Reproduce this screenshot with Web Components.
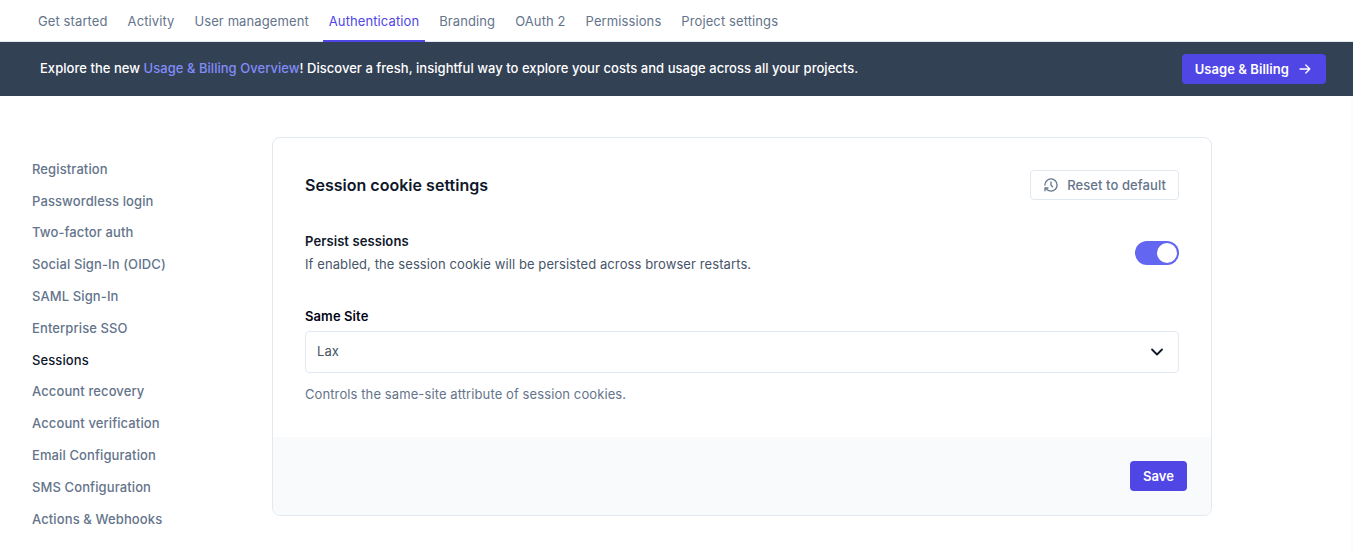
<!DOCTYPE html>
<html lang="en">
<head>
<meta charset="utf-8">
<title>Session cookie settings</title>
<style>
html, body { margin: 0; height: 554px; overflow: hidden; background: #fff; }
body { font-family: Inter, "Liberation Sans", sans-serif; font-size: 13px; line-height: 20px; color: #64748b; }
</style>
</head>
<body>
<console-page></console-page>
<script>
const define = (name, html) => customElements.define(name, class extends HTMLElement {
  constructor() {
    super();
    const t = document.createElement('template');
    t.innerHTML = html;
    this.attachShadow({ mode: 'open' }).appendChild(t.content.cloneNode(true));
  }
});

define('nav-tab', `<style>
:host { display: block; box-sizing: border-box; height: 42px; padding: 11px 6px 0; letter-spacing: .102px; white-space: nowrap; border-bottom: 2px solid transparent; }
:host([active]) { color: #4f46e5; border-color: #4f46e5; }
</style><slot></slot>`);

define('tab-bar', `<style>
:host { display: flex; gap: 8px; height: 42px; box-sizing: border-box; padding-left: 32px; background: linear-gradient(#e2e8f0, #e2e8f0) bottom / 100% 1px no-repeat; }
</style><slot></slot>`);

define('app-button', `<style>
:host { display: flex; box-sizing: border-box; height: 30px; align-items: center; padding: 0 13px; border-radius: 4px; background: #4f46e5; color: #fff; font-weight: 600; letter-spacing: .06px; white-space: nowrap; }
:host([outline]) { background: #fff; border: 1px solid #e2e8f0; color: #64748b; font-weight: 500; padding: 0 12px; letter-spacing: .08px; }
</style><slot></slot>`);

define('promo-banner', `<style>
:host { display: flex; justify-content: space-between; align-items: center; box-sizing: border-box; height: 54px; padding: 0 27px 0 40px; background: #334155; color: #fff; font-weight: 500; }
p { margin: 0 0 2px; letter-spacing: .035px; } a { color: #818cf8; }
svg { display: block; margin-left: 8px; }
</style><p>Explore the new <a>Usage &amp; Billing Overview</a>! Discover a fresh, insightful way to explore your costs and usage across all your projects.</p>
<app-button>Usage &amp; Billing<svg width="16" height="16" viewBox="0 0 16 16" fill="none" stroke="#fff" stroke-width="1.3" stroke-linecap="round" stroke-linejoin="round"><path d="M3 8h9.8M8.8 4 12.8 8 8.8 12"/></svg></app-button>`);

define('side-link', `<style>
:host { display: block; font-weight: 500; letter-spacing: .11px; white-space: nowrap; }
:host([active]) { color: #0f172a; }
</style><slot></slot>`);

define('side-nav', `<style>
:host { display: flex; flex-direction: column; gap: 11.82px; width: 240px; padding-top: 21.72px; box-sizing: border-box; }
</style><slot></slot>`);

define('toggle-switch', `<style>
:host { display: flex; justify-content: flex-end; box-sizing: border-box; width: 44px; height: 24px; padding: 2px; border-radius: 12px; background: #6366f1; }
i { width: 20px; height: 20px; border-radius: 50%; background: #fff; }
</style><i></i>`);

define('select-field', `<style>
:host { display: flex; justify-content: space-between; align-items: center; box-sizing: border-box; height: 42px; padding: 0 13px 0 11px; border: 1px solid #e2e8f0; border-radius: 4px; color: #475569; }
span { padding-bottom: 2px; letter-spacing: .1px; }
svg { display: block; }
</style><span><slot></slot></span><svg width="16" height="16" viewBox="0 0 16 16" fill="none" stroke="#0f172a" stroke-width="1.8" stroke-linecap="round" stroke-linejoin="round"><path d="m3 5.5 5 5 5-5"/></svg>`);

define('settings-card', `<style>
:host { display: block; width: 940px; height: 379px; box-sizing: border-box; border: 1px solid #e2e8f0; border-radius: 8px; overflow: hidden; }
.body { height: 299px; box-sizing: border-box; padding: 32px; }
.row { display: flex; justify-content: space-between; }
h2 { margin: 0; padding-top: 3px; font-size: 16px; line-height: 24px; font-weight: 600; letter-spacing: .02px; color: #0f172a; }
.persist { margin-top: 31px; }
b { display: block; font-weight: 600; letter-spacing: .09px; color: #0f172a; }
.text { color: #475569; letter-spacing: .095px; padding-top: 3px; }
toggle-switch { margin-top: 10px; }
.site { margin: 32px 0 5px; color: #020617; }
.hint { padding-top: 11px; letter-spacing: .1px; }
.foot { height: 78px; display: flex; justify-content: flex-end; align-items: center; padding-right: 24px; background: #f8fafc; }
svg { display: block; margin-right: 8px; }
</style>
<div class="body">
<div class="row"><h2>Session cookie settings</h2><app-button outline><svg width="16" height="16" viewBox="0 0 16 16" fill="none" stroke="#64748b" stroke-width="1.3" stroke-linecap="round" stroke-linejoin="round"><path d="M1.9 8A6.1 6.1 0 1 1 8 14.1C5.8 14.1 4 13.2 2.4 11.4M8 5v3.2l1.5 1.5"/><path d="M5 11H2v2.8"/></svg>Reset to default</app-button></div>
<div class="row persist"><div><b>Persist sessions</b><div class="text">If enabled, the session cookie will be persisted across browser restarts.</div></div><toggle-switch></toggle-switch></div>
<b class="site">Same Site</b>
<select-field>Lax</select-field>
<div class="hint">Controls the same-site attribute of session cookies.</div>
</div>
<div class="foot"><app-button>Save</app-button></div>`);

define('console-page', `<style>
:host { display: block; }
main { display: flex; box-sizing: border-box; height: 458px; padding: 41px 0 0 32px; border-right: 2px solid #fcfcfc; }
</style>
<tab-bar><nav-tab>Get started</nav-tab><nav-tab>Activity</nav-tab><nav-tab>User management</nav-tab><nav-tab active>Authentication</nav-tab><nav-tab>Branding</nav-tab><nav-tab>OAuth 2</nav-tab><nav-tab>Permissions</nav-tab><nav-tab>Project settings</nav-tab></tab-bar>
<promo-banner></promo-banner>
<main>
<side-nav><side-link>Registration</side-link><side-link>Passwordless login</side-link><side-link>Two-factor auth</side-link><side-link>Social Sign-In (OIDC)</side-link><side-link>SAML Sign-In</side-link><side-link>Enterprise SSO</side-link><side-link active>Sessions</side-link><side-link>Account recovery</side-link><side-link>Account verification</side-link><side-link>Email Configuration</side-link><side-link>SMS Configuration</side-link><side-link>Actions &amp; Webhooks</side-link></side-nav>
<settings-card></settings-card>
</main>`);
</script>
</body>
</html>
